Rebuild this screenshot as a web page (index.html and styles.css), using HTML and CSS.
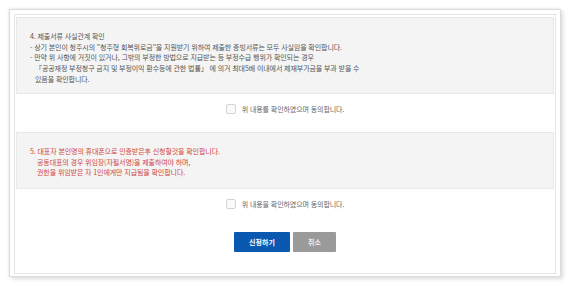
FILE: index.html
```html
<!DOCTYPE html>
<html lang="ko">
<head>
    <meta charset="UTF-8">
    <title>신청서 확인</title>
    <link rel="stylesheet" href="styles.css">
</head>
<body>
    <div class="frame">
        <div class="page">
            <div class="notice">
                <p>4. 제출서류 사실관계 확인</p>
                <p>- 상기 본인이 청주시의 "청주형 회복위로금"을 지원받기 위하여 제출한 증빙서류는 모두 사실임을 확인합니다.</p>
                <p>- 만약 위 사항에 거짓이 있거나, 그밖의 부정한 방법으로 지급받는 등 부정수급 행위가 확인되는 경우</p>
                <p class="indent">「공공재정 부정청구 금지 및 부정이익 환수등에 관한 법률」 에 의거 최대5배 이내에서 제재부가금을 부과 받을 수</p>
                <p class="indent">있음을 확인합니다.</p>
            </div>
            <label class="agree"><span class="check"></span>위 내용를 확인하였으며 동의합니다.</label>

            <div class="notice red">
                <p>5. 대표자 본인명의 휴대폰으로 인증받은후 신청할것을 확인합니다.</p>
                <p class="indent2">공동대표의 경우 위임장(자필서명)을 제출하여야 하며,</p>
                <p class="indent2">권한을 위임받은 자 1인에게만 지급됨을 확인합니다.</p>
            </div>
            <label class="agree"><span class="check"></span>위 내용을 확인하였으며 동의합니다.</label>

            <div class="buttons">
                <button class="btn btn-apply">신청하기</button>
                <button class="btn btn-cancel">취소</button>
            </div>
        </div>
    </div>
</body>
</html>
```

FILE: styles.css
```css
body {
    margin: 0;
    padding: 9px 10px 10px 9px;
    background-color: #fff;
    font-family: "Noto Sans CJK KR", "Noto Sans", sans-serif;
    color: #555;
}
.frame {
    width: 542px;
    height: 258px;
    border: 1px solid #dcdcdc;
    padding: 4px;
    background-color: #fff;
    box-shadow: 2px 2px 4px rgba(0, 0, 0, 0.14), -1px -1px 2px rgba(0, 0, 0, 0.06);
}
.page {
    height: 256px;
    border: 1px solid #e4e4e4;
    padding: 2px 1px 0 1px;
    display: flex;
    flex-direction: column;
}
.notice {
    background-color: #f4f4f4;
    border: 1px solid #e8e8e8;
    padding: 13px 14px 0 13px;
    font-size: 7px;
    line-height: 10.7px;
    letter-spacing: -0.1px;
}
.notice p {
    margin: 0;
    white-space: nowrap;
}
.notice:first-child {
    height: 62px;
}
.notice.red {
    color: #d2473b;
    height: 42px;
}
.indent {
    padding-left: 5px;
}
.indent2 {
    padding-left: 7px;
}
.agree {
    display: flex;
    align-items: center;
    justify-content: center;
    gap: 6px;
    height: 30px;
    padding-bottom: 8px;
    font-size: 7px;
    letter-spacing: -0.1px;
    color: #666;
}
.check {
    width: 8px;
    height: 8px;
    border: 1px solid #d4d4d4;
    border-radius: 2px;
    background-color: #fafafa;
}
.buttons {
    display: flex;
    justify-content: center;
    gap: 3px;
    margin-top: 5px;
}
.btn {
    height: 20px;
    border: 0;
    border-radius: 1px;
    color: #fff;
    font-family: "Noto Sans CJK KR", "Noto Sans", sans-serif;
    font-size: 7px;
    font-weight: bold;
}
.btn-apply {
    width: 56px;
    background-color: #0b58b0;
}
.btn-cancel {
    width: 43px;
    background-color: #9a9a9a;
    color: #eee;
}
```
